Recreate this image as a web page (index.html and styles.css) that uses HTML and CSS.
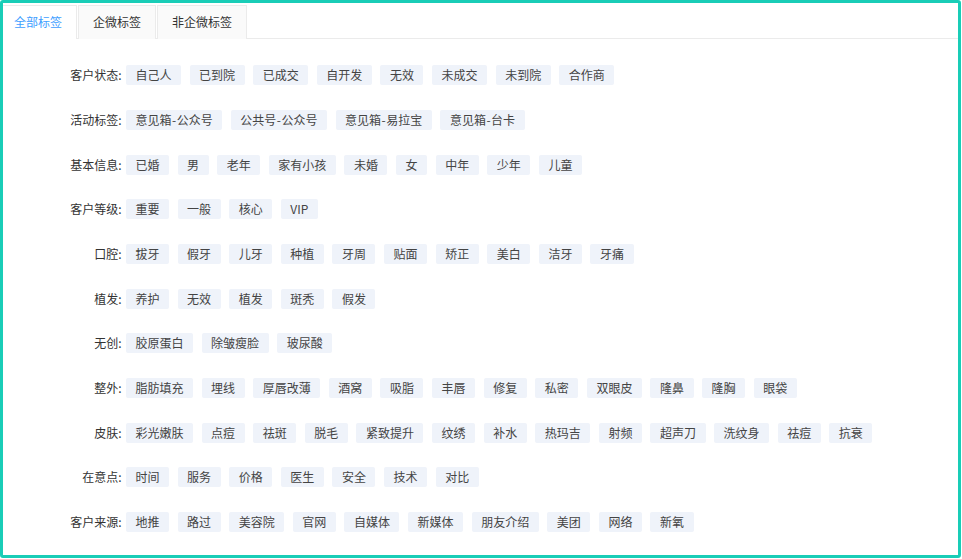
FILE: index.html
```html
<!DOCTYPE html>
<html lang="zh">
<head>
<meta charset="utf-8">
<title>标签</title>
<link rel="stylesheet" href="styles.css">
</head>
<body>
<div class="frame">
  <div class="tabs">
    <div class="tab active">全部标签</div>
    <div class="tab">企微标签</div>
    <div class="tab">非企微标签</div>
  </div>
  <div class="content">
    <div class="row"><div class="label">客户状态:</div><div class="tags"><span class="tag">自己人</span><span class="tag">已到院</span><span class="tag">已成交</span><span class="tag">自开发</span><span class="tag">无效</span><span class="tag">未成交</span><span class="tag">未到院</span><span class="tag">合作商</span></div></div>
    <div class="row"><div class="label">活动标签:</div><div class="tags"><span class="tag">意见箱<span class="dash">-</span>公众号</span><span class="tag">公共号<span class="dash">-</span>公众号</span><span class="tag">意见箱<span class="dash">-</span>易拉宝</span><span class="tag">意见箱<span class="dash">-</span>台卡</span></div></div>
    <div class="row"><div class="label">基本信息:</div><div class="tags"><span class="tag">已婚</span><span class="tag">男</span><span class="tag">老年</span><span class="tag">家有小孩</span><span class="tag">未婚</span><span class="tag">女</span><span class="tag">中年</span><span class="tag">少年</span><span class="tag">儿童</span></div></div>
    <div class="row"><div class="label">客户等级:</div><div class="tags"><span class="tag">重要</span><span class="tag">一般</span><span class="tag">核心</span><span class="tag">VIP</span></div></div>
    <div class="row"><div class="label">口腔:</div><div class="tags"><span class="tag">拔牙</span><span class="tag">假牙</span><span class="tag">儿牙</span><span class="tag">种植</span><span class="tag">牙周</span><span class="tag">贴面</span><span class="tag">矫正</span><span class="tag">美白</span><span class="tag">洁牙</span><span class="tag">牙痛</span></div></div>
    <div class="row"><div class="label">植发:</div><div class="tags"><span class="tag">养护</span><span class="tag">无效</span><span class="tag">植发</span><span class="tag">斑秃</span><span class="tag">假发</span></div></div>
    <div class="row"><div class="label">无创:</div><div class="tags"><span class="tag">胶原蛋白</span><span class="tag">除皱瘦脸</span><span class="tag">玻尿酸</span></div></div>
    <div class="row"><div class="label">整外:</div><div class="tags"><span class="tag">脂肪填充</span><span class="tag">埋线</span><span class="tag">厚唇改薄</span><span class="tag">酒窝</span><span class="tag">吸脂</span><span class="tag">丰唇</span><span class="tag">修复</span><span class="tag">私密</span><span class="tag">双眼皮</span><span class="tag">隆鼻</span><span class="tag">隆胸</span><span class="tag">眼袋</span></div></div>
    <div class="row"><div class="label">皮肤:</div><div class="tags"><span class="tag">彩光嫩肤</span><span class="tag">点痘</span><span class="tag">祛斑</span><span class="tag">脱毛</span><span class="tag">紧致提升</span><span class="tag">纹绣</span><span class="tag">补水</span><span class="tag">热玛吉</span><span class="tag">射频</span><span class="tag">超声刀</span><span class="tag">洗纹身</span><span class="tag">祛痘</span><span class="tag">抗衰</span></div></div>
    <div class="row"><div class="label">在意点:</div><div class="tags"><span class="tag">时间</span><span class="tag">服务</span><span class="tag">价格</span><span class="tag">医生</span><span class="tag">安全</span><span class="tag">技术</span><span class="tag">对比</span></div></div>
    <div class="row"><div class="label">客户来源:</div><div class="tags"><span class="tag">地推</span><span class="tag">路过</span><span class="tag">美容院</span><span class="tag">官网</span><span class="tag">自媒体</span><span class="tag">新媒体</span><span class="tag">朋友介绍</span><span class="tag">美团</span><span class="tag">网络</span><span class="tag">新氧</span></div></div>
  </div>
</div>
</body>
</html>
```

FILE: styles.css
```css
html, body {
  margin: 0;
  padding: 0;
  background: #ffffff;
}

body {
  font-family: "Noto Sans CJK SC", "Noto Sans", sans-serif;
  font-size: 12px;
  color: #333333;
}

.frame {
  box-sizing: border-box;
  width: 961px;
  height: 558px;
  border: 3px solid #19cdb7;
  border-radius: 3px;
  overflow: hidden;
  background: #ffffff;
}

.tabs {
  display: flex;
  gap: 1px;
  margin-top: 2px;
  margin-left: -4px;
  border-bottom: 1px solid #ebebeb;
  height: 33px;
}

.tab {
  box-sizing: border-box;
  height: 34px;
  padding: 0 14px;
  border: 1px solid #ebebeb;
  border-bottom: none;
  background: #fafafa;
  color: #333333;
  font-size: 12px;
  line-height: 32px;
  white-space: nowrap;
}

.tab.active {
  background: #ffffff;
  color: #409eff;
}

.content {
  padding-top: 26.3px;
}

.row {
  display: flex;
  align-items: center;
  height: 20px;
  margin-bottom: 24.67px;
}

.label {
  width: 118.5px;
  margin-right: 4.5px;
  text-align: right;
  color: #333333;
  white-space: nowrap;
  line-height: 20px;
}

.tags {
  display: flex;
  gap: 8.6px;
}

.tag {
  height: 20px;
  line-height: 20px;
  padding: 0 9.5px;
  background: #eff3fa;
  color: #444444;
  border-radius: 2px;
  white-space: nowrap;
}

.dash {
  margin: 0 0.5px;
}
```
